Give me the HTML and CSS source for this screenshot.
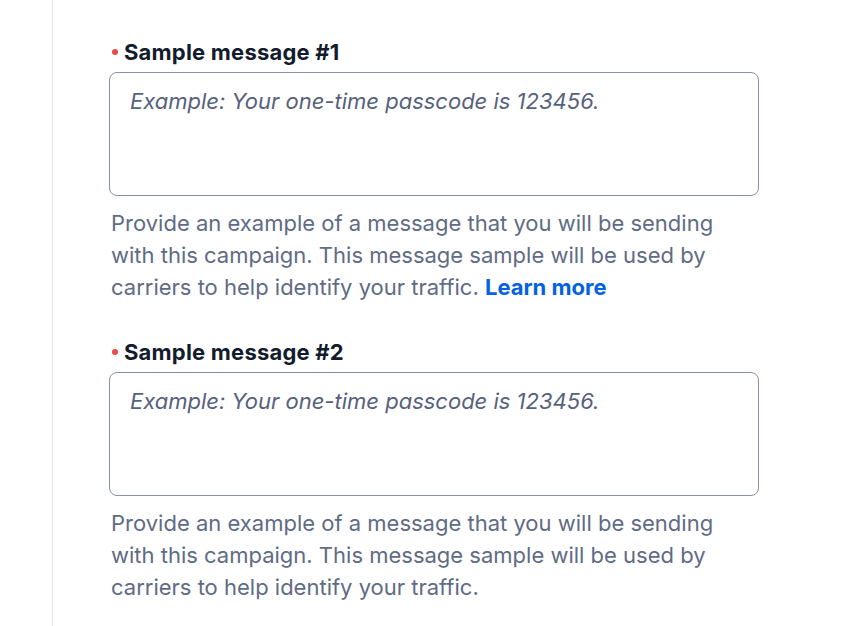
FILE: index.html
```html
<!DOCTYPE html>
<html lang="en">
<head>
    <meta charset="UTF-8">
    <meta name="viewport" content="width=device-width, initial-scale=1.0">
    <title>Sample messages</title>
    <link rel="stylesheet" href="styles.css">
</head>
<body>

<div class="page">
    <div class="form">
        <div class="field">
            <label class="field-label" for="sample1"><span class="required"></span>Sample message #1</label>
            <textarea id="sample1" class="text-box" placeholder="Example: Your one-time passcode is 123456."></textarea>
            <p class="help-text">Provide an example of a message that you will be sending with this campaign. This message sample will be used by carriers to help identify your traffic. <a href="#" class="learn-more">Learn more</a></p>
        </div>

        <div class="field">
            <label class="field-label" for="sample2"><span class="required"></span>Sample message #2</label>
            <textarea id="sample2" class="text-box" placeholder="Example: Your one-time passcode is 123456."></textarea>
            <p class="help-text">Provide an example of a message that you will be sending with this campaign. This message sample will be used by carriers to help identify your traffic.</p>
        </div>
    </div>
</div>

</body>
</html>
```

FILE: styles.css
```css
body {
    font-family: Inter, "Noto Sans", sans-serif;
    margin: 0;
    background-color: #ffffff;
    color: #121c2d;
    overflow: hidden;
}
.page {
    margin-left: 52px;
    height: 626px;
    border-left: 1px solid #e1e3ea;
    padding-top: 38px;
    padding-left: 56px;
    box-sizing: border-box;
}
.form {
    width: 650px;
}
.field {
    margin-bottom: 35px;
}
.field-label {
    display: flex;
    align-items: center;
    font-size: 22px;
    font-weight: 700;
    line-height: 28px;
    letter-spacing: 0.2px;
    margin-bottom: 6px;
    padding-left: 3px;
}
.required {
    width: 6px;
    height: 6px;
    border-radius: 50%;
    background-color: #eb4a4a;
    margin-right: 6px;
}
.text-box {
    display: block;
    box-sizing: border-box;
    width: 100%;
    height: 124px;
    padding: 13px 20px;
    border: 1px solid #8891aa;
    border-radius: 8px;
    font-family: inherit;
    font-size: 22px;
    line-height: 30px;
    resize: none;
}
.text-box::placeholder {
    color: #56617d;
    font-style: italic;
}
.help-text {
    margin: 11px 0 0 2px;
    font-size: 22px;
    line-height: 32px;
    color: #606b85;
    width: 630px;
}
.learn-more {
    color: #0263e0;
    font-weight: 700;
    text-decoration: none;
}
```
